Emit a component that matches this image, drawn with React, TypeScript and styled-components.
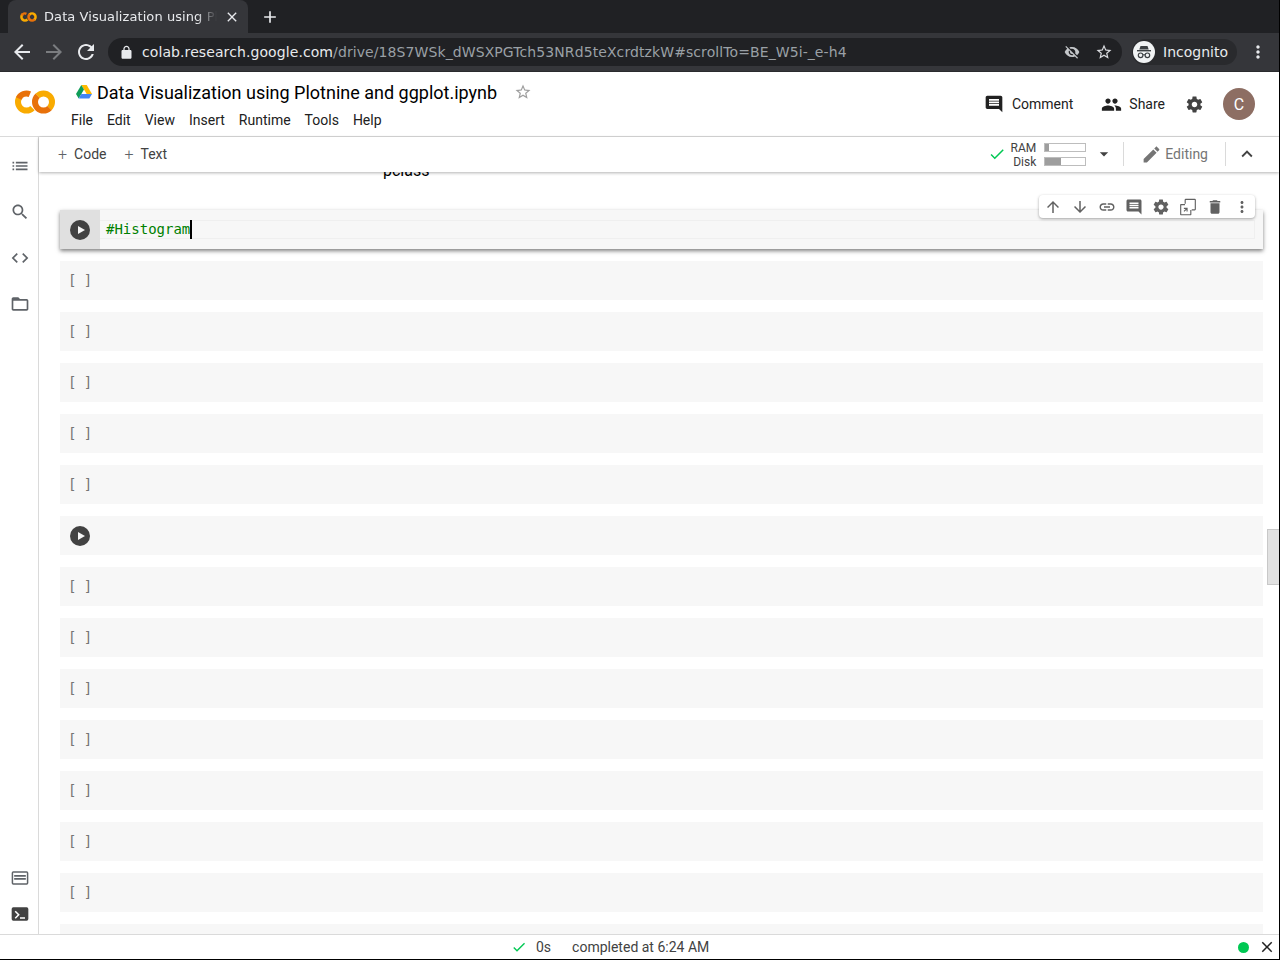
import React from "react";
import styled, { createGlobalStyle } from "styled-components";

const P = {
  comment: "M21.99 4c0-1.1-.89-2-1.99-2H4c-1.1 0-2 .9-2 2v12c0 1.1.9 2 2 2h14l4 4-.01-18zM18 14H6v-2h12v2zm0-3H6V9h12v2zm0-3H6V6h12v2z",
  people: "M16 11c1.66 0 2.99-1.34 2.99-3S17.66 5 16 5c-1.66 0-3 1.34-3 3s1.34 3 3 3zm-8 0c1.66 0 2.99-1.34 2.99-3S9.66 5 8 5C6.34 5 5 6.34 5 8s1.34 3 3 3zm0 2c-2.33 0-7 1.17-7 3.5V19h14v-2.5c0-2.33-4.67-3.5-7-3.5zm8 0c-.29 0-.62.02-.97.05 1.16.84 1.97 1.97 1.97 3.45V19h6v-2.5c0-2.33-4.67-3.5-7-3.5z",
  gear: "M19.43 12.98c.04-.32.07-.64.07-.98s-.03-.66-.07-.98l2.11-1.65c.19-.15.24-.42.12-.64l-2-3.46c-.12-.22-.39-.3-.61-.22l-2.49 1c-.52-.4-1.08-.73-1.69-.98l-.38-2.65C14.46 2.18 14.25 2 14 2h-4c-.25 0-.46.18-.49.42l-.38 2.65c-.61.25-1.17.59-1.69.98l-2.49-1c-.23-.09-.49 0-.61.22l-2 3.46c-.13.22-.07.49.12.64l2.11 1.65c-.04.32-.07.65-.07.98s.03.66.07.98l-2.11 1.65c-.19.15-.24.42-.12.64l2 3.46c.12.22.39.3.61.22l2.49-1c.52.4 1.08.73 1.69.98l.38 2.65c.03.24.24.42.49.42h4c.25 0 .46-.18.49-.42l.38-2.65c.61-.25 1.17-.59 1.69-.98l2.49 1c.23.09.49 0 .61-.22l2-3.46c.12-.22.07-.49-.12-.64l-2.11-1.65zM12 15.5c-1.93 0-3.5-1.57-3.5-3.5s1.57-3.5 3.5-3.5 3.5 1.57 3.5 3.5-1.57 3.5-3.5 3.5z",
  edit: "M3 17.25V21h3.75L17.81 9.94l-3.75-3.75L3 17.25zM20.71 7.04c.39-.39.39-1.02 0-1.41l-2.34-2.34c-.39-.39-1.02-.39-1.41 0l-1.83 1.83 3.75 3.75 1.83-1.83z",
  trash: "M6 19c0 1.1.9 2 2 2h8c1.1 0 2-.9 2-2V7H6v12zM19 4h-3.5l-1-1h-5l-1 1H5v2h14V4z",
  link: "M3.9 12c0-1.71 1.39-3.1 3.1-3.1h4V7H7c-2.76 0-5 2.24-5 5s2.24 5 5 5h4v-1.9H7c-1.71 0-3.1-1.39-3.1-3.1zM8 13h8v-2H8v2zm9-6h-4v1.9h4c1.71 0 3.1 1.39 3.1 3.1s-1.39 3.1-3.1 3.1h-4V17h4c2.76 0 5-2.24 5-5s-2.24-5-5-5z",
  up: "M4 12l1.41 1.41L11 7.83V20h2V7.83l5.58 5.59L20 12l-8-8-8 8z",
  down: "M20 12l-1.41-1.41L13 16.17V4h-2v12.17l-5.58-5.59L4 12l8 8 8-8z",
  more: "M12 8c1.1 0 2-.9 2-2s-.9-2-2-2-2 .9-2 2 .9 2 2 2zm0 2c-1.1 0-2 .9-2 2s.9 2 2 2 2-.9 2-2-.9-2-2-2zm0 6c-1.1 0-2 .9-2 2s.9 2 2 2 2-.9 2-2-.9-2-2-2z",
  mirror: "M9 1h12a1.5 1.5 0 0 1 1.5 1.5V15a1.5 1.5 0 0 1-1.5 1.5h-4V15h4V2.5H9v5H7.5v-5A1.5 1.5 0 0 1 9 1zM2.5 8H8v1.5H3V21.5h12V16h1.5v6a1 1 0 0 1-1 1h-13a1 1 0 0 1-1-1V9a1 1 0 0 1 1-1zm4 5h5v5H10v-2.4l-2.8 2.8-1.1-1.1L8.9 14.5H6.5V13z",
  list: "M3 13h2v-2H3v2zm0 4h2v-2H3v2zm0-8h2V7H3v2zm4 4h14v-2H7v2zm0 4h14v-2H7v2zM7 7v2h14V7H7z",
  search: "M15.5 14h-.79l-.28-.27C15.41 12.59 16 11.11 16 9.5 16 5.91 13.09 3 9.5 3S3 5.91 3 9.5 5.91 16 9.5 16c1.61 0 3.09-.59 4.23-1.57l.27.28v.79l5 4.99L20.49 19l-4.99-5zm-6 0C7.01 14 5 11.99 5 9.5S7.01 5 9.5 5 14 7.01 14 9.5 11.99 14 9.5 14z",
  code: "M9.4 16.6L4.8 12l4.6-4.6L8 6l-6 6 6 6 1.4-1.4zm5.2 0l4.6-4.6-4.6-4.6L16 6l6 6-6 6-1.4-1.4z",
  folder: "M20 6h-8l-2-2H4c-1.1 0-2 .9-2 2v12c0 1.1.9 2 2 2h16c1.1 0 2-.9 2-2V8c0-1.1-.9-2-2-2zm0 12H4V8h16v10z",
  snippet: "M4 4h16a2 2 0 0 1 2 2v12a2 2 0 0 1-2 2H4a2 2 0 0 1-2-2V6a2 2 0 0 1 2-2zm0 1.8c-.1 0-.2.1-.2.2v12c0 .1.1.2.2.2h16c.1 0 .2-.1.2-.2V6c0-.1-.1-.2-.2-.2H4zM5 8.5h14v2H5v-2zm0 3.5h14v2H5v-2z",
  terminal: "M4 4h16a2 2 0 0 1 2 2v12a2 2 0 0 1-2 2H4a2 2 0 0 1-2-2V6a2 2 0 0 1 2-2zm1.6 5.4L9.2 13l-3.6 3.6 1.3 1.2 4.8-4.8-4.8-4.8-1.3 1.2zM12 16v1.8h6V16h-6z",
  check: "M9 16.17L4.83 12l-1.42 1.41L9 19 21 7l-1.41-1.41z",
  close: "M19 6.41L17.59 5 12 10.59 6.41 5 5 6.41 10.59 12 5 17.59 6.41 19 12 13.41 17.59 19 19 17.59 13.41 12z",
  chevUp: "M7.41 15.41L12 10.83l4.59 4.58L18 14l-6-6-6 6z",
  caret: "M7 10l5 5 5-5z",
  back: "M20 11H7.83l5.59-5.59L12 4l-8 8 8 8 1.41-1.41L7.83 13H20v-2z",
  forward: "M12 4l-1.41 1.41L16.17 11H4v2h12.17l-5.58 5.59L12 20l8-8z",
  reload: "M17.65 6.35C16.2 4.9 14.21 4 12 4c-4.42 0-7.99 3.58-7.99 8s3.57 8 7.99 8c3.73 0 6.84-2.55 7.73-6h-2.08c-.82 2.33-3.04 4-5.65 4-3.31 0-6-2.69-6-6s2.69-6 6-6c1.66 0 3.14.69 4.22 1.78L13 11h7V4l-2.35 2.35z",
  lock: "M18 8h-1V6c0-2.76-2.24-5-5-5S7 3.24 7 6v2H6c-1.1 0-2 .9-2 2v10c0 1.1.9 2 2 2h12c1.1 0 2-.9 2-2V10c0-1.1-.9-2-2-2zM9 6c0-1.66 1.34-3 3-3s3 1.34 3 3v2H9V6z",
  eyeOff: "M12 7c2.76 0 5 2.24 5 5 0 .65-.13 1.26-.36 1.83l2.92 2.92c1.51-1.26 2.7-2.89 3.43-4.75-1.73-4.39-6-7.5-11-7.5-1.4 0-2.74.25-3.98.7l2.16 2.16C10.74 7.13 11.35 7 12 7zM2 4.27l2.28 2.28.46.46C3.08 8.3 1.78 10.02 1 12c1.73 4.39 6 7.5 11 7.5 1.55 0 3.03-.3 4.38-.84l.42.42L19.73 22 21 20.73 3.27 3 2 4.27zM7.53 9.8l1.55 1.55c-.05.21-.08.43-.08.65 0 1.66 1.34 3 3 3 .22 0 .44-.03.65-.08l1.55 1.55c-.67.33-1.41.53-2.2.53-2.76 0-5-2.24-5-5 0-.79.2-1.53.53-2.2z",
  star: "M22 9.24l-7.19-.62L12 2 9.19 8.63 2 9.24l5.46 4.73L5.82 21 12 17.27 18.18 21l-1.63-7.03L22 9.24zM12 15.4l-3.76 2.27 1-4.28-3.32-2.88 4.38-.38L12 6.1l1.71 4.04 4.38.38-3.32 2.88 1 4.28L12 15.4z",
};

const Global = createGlobalStyle`
  html, body { margin: 0; padding: 0; background: #000; }
  * { box-sizing: border-box; }
  #root { width: 1280px; height: 960px; overflow: hidden; }
`;

const Ico = styled.svg<{ $c?: string }>`
  display: block;
  flex: none;
  fill: ${(p) => p.$c || "#424242"};
`;
const Icon = ({ d, size = 24, c }: { d: string; size?: number; c?: string }) => (
  <Ico viewBox="0 0 24 24" width={size} height={size} $c={c}>
    <path d={d} />
  </Ico>
);

const Page = styled.div`
  width: 1279px;
  height: 959px;
  display: flex;
  flex-direction: column;
  background: #fff;
  font-family: Roboto, sans-serif;
  overflow: hidden;
`;

/* browser chrome */
const TabStrip = styled.div`
  height: 33px;
  background: #202124;
  padding: 0 0 0 8px;
  display: flex;
  align-items: flex-end;
`;
const Tab = styled.div`
  width: 240px;
  height: 33px;
  background: #35363a;
  border-radius: 8px 8px 0 0;
  display: flex;
  align-items: center;
  padding: 0 0 0 12px;
  color: #e8eaed;
  font: 13px "DejaVu Sans", sans-serif;
  letter-spacing: 0.08px;
`;
const TabTitle = styled.span`
  width: 173px;
  margin-left: 7px;
  white-space: nowrap;
  overflow: hidden;
  -webkit-mask-image: linear-gradient(90deg, #000 88%, transparent);
  mask-image: linear-gradient(90deg, #000 88%, transparent);
`;
const TabClose = styled.span`
  margin-left: 7px;
`;
const NewTab = styled.div`
  margin: 0 0 6px 12px;
`;
const NavBar = styled.div`
  height: 39px;
  background: #35363a;
  border-bottom: 1px solid #2a2b2e;
  display: flex;
  align-items: center;
  padding: 0 0 0 10px;
  gap: 8px;
`;
const UrlPill = styled.div`
  width: 1014px;
  height: 28px;
  margin-left: 2px;
  border-radius: 14px;
  background: #202124;
  display: flex;
  align-items: center;
  padding: 0 9px 0 11px;
  font: 14px "DejaVu Sans", sans-serif;
  letter-spacing: 0.09px;
`;
const Host = styled.span`
  color: #e8eaed;
  margin-left: 8px;
`;
const Path = styled.span`
  color: #9aa0a6;
  flex: 1;
  white-space: nowrap;
`;
const PillIcons = styled.div`
  display: flex;
  gap: 15px;
  align-items: center;
`;
const Incognito = styled.div`
  width: 105px;
  height: 26px;
  margin-left: 2px;
  border-radius: 13px;
  background: #292a2d;
  display: flex;
  align-items: center;
  gap: 8px;
  padding-left: 1px;
  color: #e8eaed;
  font: 14px "DejaVu Sans", sans-serif;
`;
const SpyBadge = styled.div`
  width: 22px;
  height: 22px;
  border-radius: 50%;
  background: #f1f3f4;
  display: flex;
  align-items: center;
  justify-content: center;
`;
const Kebab = styled.div`
  margin-left: 3px;
`;

/* colab header */
const Header = styled.div`
  height: 65px;
  border-bottom: 1px solid #dadada;
  display: flex;
  padding-left: 15px;
`;
const LogoSlot = styled.div`
  width: 56px;
  padding-top: 18px;
`;
const TitleCol = styled.div`
  flex: 1;
  padding-top: 9px;
`;
const TitleRow = styled.div`
  display: flex;
  align-items: center;
  height: 22px;
  padding-left: 5px;
`;
const Title = styled.span`
  font-size: 18px;
  color: #000;
  margin-left: 5px;
  white-space: nowrap;
`;
const TitleStar = styled.span`
  margin-left: 17px;
  margin-top: -1px;
`;
const Menu = styled.div`
  display: flex;
  gap: 14px;
  margin-top: 7px;
  font-size: 14px;
  line-height: 20px;
  color: #212121;
`;
const Actions = styled.div`
  display: flex;
  align-items: center;
  padding: 0 24px 0 0;
  color: #212121;
  font-size: 14px;
`;
const Action = styled.div<{ $gap: number; $ml?: number }>`
  display: flex;
  align-items: center;
  gap: ${(p) => p.$gap}px;
  margin-left: ${(p) => p.$ml || 0}px;
`;
const Avatar = styled.div`
  width: 32px;
  height: 32px;
  margin-left: 19px;
  border-radius: 50%;
  background: #8d6e63;
  color: #fff;
  font-size: 16px;
  display: flex;
  align-items: center;
  justify-content: center;
`;

/* body */
const Body = styled.div`
  flex: 1;
  min-height: 0;
  display: flex;
`;
const Side = styled.div`
  width: 39px;
  border-right: 1px solid #dadada;
  display: flex;
  flex-direction: column;
  align-items: center;
  padding: 19px 0 10px 2px;
`;
const SideGroup = styled.div`
  display: flex;
  flex-direction: column;
  gap: 26px;
`;
const SideBottom = styled(SideGroup)`
  margin-top: auto;
  gap: 16px;
`;
const Content = styled.div`
  flex: 1;
  min-width: 0;
  display: flex;
  flex-direction: column;
  position: relative;
`;
const Toolbar = styled.div`
  height: 35px;
  flex: none;
  display: flex;
  align-items: center;
  padding: 0 21px 1px 19px;
  background: #fff;
  box-shadow: 0 1px 3px rgba(0, 0, 0, 0.3);
  position: relative;
  z-index: 3;
  color: #5f6368;
  font-size: 14px;
`;
const AddBtn = styled.div`
  display: flex;
  align-items: center;
  gap: 7px;
  margin-right: 18px;
  color: #424242;
`;
const Plus = styled.span`
  font-size: 16px;
  font-weight: 300;
  color: #5f6368;
`;
const Right = styled.div`
  margin-left: auto;
  display: flex;
  align-items: center;
`;
const Labels = styled.div`
  margin: 2px 0 0 5px;
  font-size: 12px;
  line-height: 14px;
  text-align: right;
  color: #424242;
`;
const Bars = styled.div`
  margin-left: 8px;
  display: flex;
  flex-direction: column;
  gap: 5px;
`;
const Bar = styled.div`
  width: 42px;
  height: 9px;
  border: 1px solid #bdbdbd;
  background: #fff;
`;
const BarFill = styled.div`
  height: 100%;
  background: #9e9e9e;
`;
const CaretSlot = styled.div`
  margin-left: 8px;
`;
const Divider = styled.div<{ $ml: number }>`
  width: 1px;
  height: 24px;
  background: #dadada;
  margin-left: ${(p) => p.$ml}px;
`;
const Editing = styled.div`
  display: flex;
  align-items: center;
  gap: 3px;
  margin-left: 17px;
  color: #757575;
`;
const ChevSlot = styled.div`
  margin-left: 10px;
`;

const Scroll = styled.div`
  flex: 1;
  min-height: 0;
  overflow: hidden;
  padding: 0 16px 0 21px;
  position: relative;
`;
const Clipped = styled.div`
  height: 37px;
  margin-top: -11px;
  padding-left: 323px;
  font-size: 16px;
  line-height: 20px;
  color: #000;
  margin-bottom: 12px;
`;
const ActiveCell = styled.div`
  height: 39px;
  display: flex;
  background: #f7f7f7;
  box-shadow: 0 2px 4px rgba(0, 0, 0, 0.5);
  position: relative;
`;
const Gutter = styled.div`
  width: 40px;
  background: #e0e0e0;
  display: flex;
  align-items: center;
  justify-content: center;
`;
const RunBtn = styled.div`
  width: 20px;
  height: 20px;
  border-radius: 50%;
  background: #424242;
  display: flex;
  align-items: center;
  justify-content: center;
  &::after {
    content: "";
    margin-left: 2px;
    border-left: 7px solid #f5f5f5;
    border-top: 4px solid transparent;
    border-bottom: 4px solid transparent;
  }
`;
const EditorLine = styled.div`
  flex: 1;
  height: 19px;
  margin: 10px 8px 0 0;
  border-top: 1px solid #efefef;
  border-bottom: 1px solid #efefef;
  border-right: 1px solid #efefef;
  padding-left: 6px;
  display: flex;
  align-items: center;
  font: 14px/17px "DejaVu Sans Mono", monospace;
  color: #008000;
`;
const Caret = styled.span`
  display: block;
  width: 2px;
  height: 19px;
  background: #000;
`;
const CellTools = styled.div`
  position: absolute;
  top: -15px;
  right: 8px;
  width: 216px;
  height: 23px;
  background: #fff;
  border-radius: 4px;
  box-shadow: 0 1px 3px rgba(0, 0, 0, 0.35);
  display: flex;
  align-items: center;
`;
const ToolSlot = styled.div`
  width: 27px;
  display: flex;
  justify-content: center;
`;
const Cell = styled.div`
  height: 39px;
  margin-top: 12px;
  background: #f7f7f7;
  display: flex;
  align-items: center;
`;
const Brackets = styled.span`
  margin: -2px 0 0 8px;
  font: 14px "DejaVu Sans Mono", monospace;
  color: #757575;
  white-space: pre;
  letter-spacing: -0.6px;
`;
const CellRun = styled.div`
  margin-left: 10px;
`;
const Thumb = styled.div`
  position: absolute;
  right: 0;
  top: 357px;
  width: 12px;
  height: 56px;
  background: #e1e1e1;
  border: 1px solid #c8c8c8;
  border-right: 0;
`;

const Status = styled.div`
  height: 25px;
  flex: none;
  border-top: 1px solid #dadada;
  display: flex;
  align-items: center;
  font-size: 14px;
  color: #424242;
  padding: 0 3px 0 511px;
`;
const StatusCheck = styled.div`
  margin-right: 9px;
`;
const Completed = styled.span`
  margin-left: 21px;
`;
const Dot = styled.div`
  width: 11px;
  height: 11px;
  border-radius: 50%;
  background: #00c853;
  margin-left: auto;
  margin-right: 9px;
`;

const ColabLogo = ({ w, h }: { w: number; h: number }) => (
  <svg width={w} height={h} viewBox="0 0 40 24" style={{ display: "block" }}>
    <circle cx="11.5" cy="12" r="8.5" fill="none" stroke="#f9ab00" strokeWidth="6" strokeDasharray="26.7 26.7" transform="rotate(45 11.5 12)" />
    <circle cx="11.5" cy="12" r="8.5" fill="none" stroke="#e8710a" strokeWidth="6" strokeDasharray="13 40.4" transform="rotate(-155 11.5 12)" />
    <circle cx="28.5" cy="12" r="8.5" fill="none" stroke="#f9ab00" strokeWidth="6" strokeDasharray="26.7 26.7" transform="rotate(-135 28.5 12)" />
    <circle cx="28.5" cy="12" r="8.5" fill="none" stroke="#e8710a" strokeWidth="6" strokeDasharray="26.7 26.7" transform="rotate(45 28.5 12)" />
  </svg>
);

const DriveLogo = () => (
  <svg width="16" height="14" viewBox="0 0 16 14" style={{ display: "block", flex: "none" }}>
    <path d="M5.3 0h5.4l5.3 9h-5.3z" fill="#ffba00" />
    <path d="M5.3 0L0 9l2.7 4.6L8 4.6z" fill="#0f9d58" />
    <path d="M5.3 9H16l-2.7 4.6H2.7z" fill="#4285f4" />
  </svg>
);

const Spy = () => (
  <svg width="18" height="18" viewBox="0 0 18 18" style={{ display: "block" }}>
    <path d="M5.5 3h7l1.2 3.6H4.3z" fill="#3c4043" />
    <rect x="2" y="7" width="14" height="1.4" fill="#3c4043" />
    <circle cx="5.6" cy="12.3" r="2.3" fill="none" stroke="#3c4043" strokeWidth="1.2" />
    <circle cx="12.4" cy="12.3" r="2.3" fill="none" stroke="#3c4043" strokeWidth="1.2" />
    <path d="M7.9 11.8h2.2" stroke="#3c4043" strokeWidth="1" />
  </svg>
);

const rows = ["b", "b", "b", "b", "b", "r", "b", "b", "b", "b", "b", "b", "b", "b"];
const tools = [P.up, P.down, P.link, P.comment, P.gear, P.mirror, P.trash, P.more];

export default function App() {
  return (
    <Page>
      <Global />
      <TabStrip>
        <Tab>
          <ColabLogo w={17} h={10} />
          <TabTitle>Data Visualization using Plotnine</TabTitle>
          <TabClose><Icon d={P.close} size={16} c="#e8eaed" /></TabClose>
        </Tab>
        <NewTab><Icon d="M19 13h-6v6h-2v-6H5v-2h6V5h2v6h6v2z" size={20} c="#e8eaed" /></NewTab>
      </TabStrip>
      <NavBar>
        <Icon d={P.back} c="#e8eaed" size={24} />
        <Icon d={P.forward} c="#7b7d80" size={24} />
        <Icon d={P.reload} c="#e8eaed" size={24} />
        <UrlPill>
          <Icon d={P.lock} size={15} c="#e8eaed" />
          <Host>colab.research.google.com</Host>
          <Path>/drive/18S7WSk_dWSXPGTch53NRd5teXcrdtzkW#scrollTo=BE_W5i-_e-h4</Path>
          <PillIcons>
            <Icon d={P.eyeOff} size={16} c="#c4c7ca" />
            <Icon d={P.star} size={18} c="#dadce0" />
          </PillIcons>
        </UrlPill>
        <Incognito>
          <SpyBadge><Spy /></SpyBadge>
          Incognito
        </Incognito>
        <Kebab><Icon d={P.more} size={20} c="#e8eaed" /></Kebab>
      </NavBar>

      <Header>
        <LogoSlot><ColabLogo w={40} h={24} /></LogoSlot>
        <TitleCol>
          <TitleRow>
            <DriveLogo />
            <Title>Data Visualization using Plotnine and ggplot.ipynb</Title>
            <TitleStar><Icon d={P.star} size={18} c="#9e9e9e" /></TitleStar>
          </TitleRow>
          <Menu>
            <span>File</span><span>Edit</span><span>View</span><span>Insert</span>
            <span>Runtime</span><span>Tools</span><span>Help</span>
          </Menu>
        </TitleCol>
        <Actions>
          <Action $gap={8}><Icon d={P.comment} size={20} c="#212121" />Comment</Action>
          <Action $gap={7} $ml={28}><Icon d={P.people} size={21} c="#212121" />Share</Action>
          <Action $gap={0} $ml={20}><Icon d={P.gear} size={19} c="#424242" /></Action>
          <Avatar>C</Avatar>
        </Actions>
      </Header>

      <Body>
        <Side>
          <SideGroup>
            <Icon d={P.list} size={20} c="#5f6368" />
            <Icon d={P.search} size={20} c="#5f6368" />
            <Icon d={P.code} size={20} c="#5f6368" />
            <Icon d={P.folder} size={20} c="#5f6368" />
          </SideGroup>
          <SideBottom>
            <Icon d={P.snippet} size={20} c="#5f6368" />
            <Icon d={P.terminal} size={20} c="#424242" />
          </SideBottom>
        </Side>
        <Content>
          <Toolbar>
            <AddBtn><Plus>+</Plus>Code</AddBtn>
            <AddBtn><Plus>+</Plus>Text</AddBtn>
            <Right>
              <Icon d={P.check} size={18} c="#00c853" />
              <Labels>RAM<br />Disk</Labels>
              <Bars>
                <Bar><BarFill style={{ width: "10%" }} /></Bar>
                <Bar><BarFill style={{ width: "40%" }} /></Bar>
              </Bars>
              <CaretSlot><Icon d={P.caret} size={20} c="#424242" /></CaretSlot>
              <Divider $ml={9} />
              <Editing><Icon d={P.edit} size={21} c="#757575" />Editing</Editing>
              <Divider $ml={17} />
              <ChevSlot><Icon d={P.chevUp} size={22} c="#424242" /></ChevSlot>
            </Right>
          </Toolbar>
          <Scroll>
            <Clipped>pclass</Clipped>
            <ActiveCell>
              <Gutter><RunBtn /></Gutter>
              <EditorLine>#Histogram<Caret /></EditorLine>
              <CellTools>
                {tools.map((d, i) => (
                  <ToolSlot key={i}><Icon d={d} size={18} c="#616161" /></ToolSlot>
                ))}
              </CellTools>
            </ActiveCell>
            {rows.map((r, i) => (
              <Cell key={i}>
                {r === "b" ? <Brackets>[ ]</Brackets> : <CellRun><RunBtn /></CellRun>}
              </Cell>
            ))}
            <Thumb />
          </Scroll>
        </Content>
      </Body>

      <Status>
        <StatusCheck><Icon d={P.check} size={16} c="#00c853" /></StatusCheck>
        0s
        <Completed>completed at 6:24 AM</Completed>
        <Dot />
        <Icon d={P.close} size={18} c="#212121" />
      </Status>
    </Page>
  );
}
